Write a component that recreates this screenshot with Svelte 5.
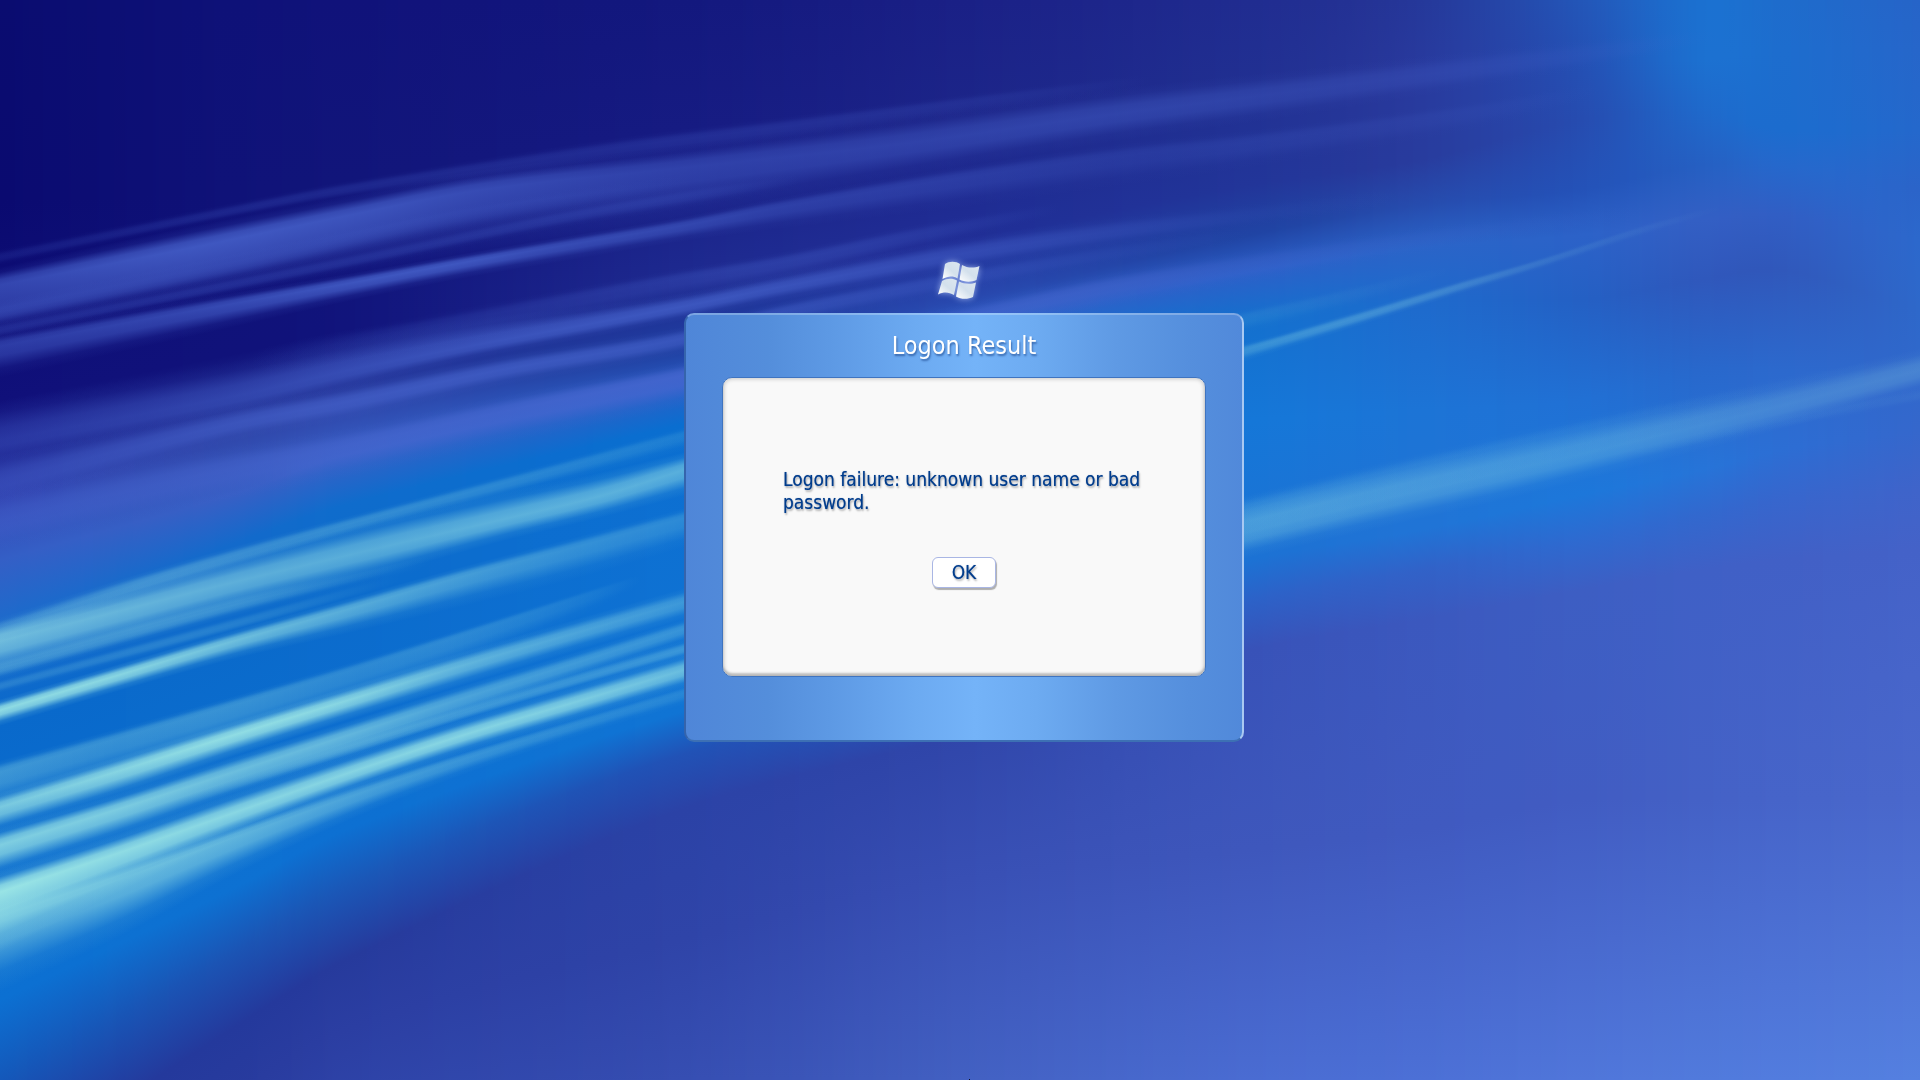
<script>
  // Smooth backdrop: each column lists [y, colour] bands that flow into the next column.
  const columns = [
    [0, '0:0a0c70 200:0a0a70 400:10107a 500:3347b4 560:345fc6 630:1a6ccc 720:0969cb 1000:0c70d2 1080:1458ba 1180:24389c 1280:283a9e 1400:2c409f'],
    [230, '0:0e1178 190:0f1278 355:10127a 440:3048ac 495:385fc5 545:136acb 650:0a6acb 890:0d71d2 955:1b54b4 1030:24399c 1100:283b9e 1200:2c40a4'],
    [345, '0:10127a 180:11157a 330:11147c 400:2c42a6 455:3860c6 505:0f6ccc 600:0b6bcc 830:0d70d2 885:1a58b8 960:263a9c 1030:2b3ea2 1120:2f45aa'],
    [680, '0:13187e 130:161b82 285:1e2a90 350:2040a2 388:2a60c6 425:0a6ed0 520:0d70d2 712:1074d4 755:2152b6 810:2b42a6 940:2f44a8 1080:364eb2'],
    [960, '0:1a2086 120:1c2589 240:202e96 300:2848ae 330:2e62c8 360:1070d0 450:1074d4 640:1476d6 690:2458bc 735:3046aa 880:384fb4 1080:4260c2'],
    [1250, '0:202c90 90:213092 185:223599 235:2044a4 272:2c60c8 320:1470ce 420:1577d8 560:1c72d4 600:2c62c8 650:3852b8 850:3e57bc 1080:4a6cd2'],
    [1420, '0:25389a 70:283a9e 160:283c9e 205:264cae 248:2a64c8 300:1e6acc 410:1c74d6 530:2074d6 570:3162c8 620:3b58be 830:405ac0 1080:4c70d6'],
    [1580, '0:2356b8 60:2450b4 120:264cb0 190:2452b8 235:2c62c8 300:2460c4 400:2170d4 495:1d77da 540:2e6ad0 590:3d5ec3 800:415cc2 1080:5076da'],
    [1700, '0:1b70d0 60:1c70d0 112:1f68ca 165:255fc2 220:335fc4 280:2f58bc 370:2868cc 470:2674d8 515:3268ce 570:3f60c6 800:4461c6 1080:517adc'],
    [1780, '0:1e6ccc 50:1d6dce 130:1c6cce 165:2568cc 215:315ec4 270:3058bb 370:2c69cd 450:2c6ed4 500:3766cd 560:4160c6 800:4664c9 1080:527cde'],
    [1920, '0:2664c8 50:2666ca 130:2468cc 190:2b64c9 240:2c68cc 310:2e68ca 380:3068cc 430:3567cc 490:3f64ca 550:4462c8 800:4a68cc 1080:5480e0'],
  ].map(([x, bands]) => [x, ...bands.split(' ').flatMap((band) => {
    const [y, hex] = band.split(':');
    return [+y, ...[0, 2, 4].map((i) => parseInt(hex.slice(i, i + 2), 16))];
  })]);

  // Light streaks: nodes are [x, y, fade above, fade below, strength].
  const violet = '76,106,212';
  const aqua = '172,244,232';
  const streaks = [
    [violet, [[0,285,18,62,.62],[180,250,22,58,.78],[345,216,20,60,.74],[480,190,20,60,.62],[680,168,22,50,.46],[900,144,28,34,.42],[1100,116,26,28,.4],[1290,92,22,25,.3],[1600,52,15,15,.1],[1720,35,10,10,0]]],
    [violet, [[0,312,12,14,.3],[240,264,12,14,.25],[440,220,10,14,.15],[690,180,10,10,0]]],
    [violet, [[0,257,8,8,.16],[230,211,8,8,.22],[345,189,8,10,.22],[600,150,10,16,.22],[780,127,10,16,.22],[1000,98,8,14,.14],[1150,80,8,10,0]]],
    [violet, [[0,346,14,32,.5],[180,313,12,26,.6],[350,283,10,18,.75],[460,263,9,16,.75],[560,246,9,16,.6],[680,226,9,16,.5],[780,207,10,22,.38],[960,178,12,30,.3],[1128,155,12,30,.2],[1250,142,12,26,.18],[1460,113,10,20,.1],[1600,90,10,10,0]]],
    [violet, [[0,330,8,8,.25],[340,263,9,9,.25],[550,220,9,10,.25],[690,196,9,12,.2],[800,180,8,8,0]]],
    [violet, [[0,440,40,20,.25],[230,397,36,20,.4],[345,371,32,18,.5],[460,348,28,14,.6],[600,322,18,14,.65],[690,305,14,14,.65],[780,287,14,14,.58],[960,254,16,16,.42],[1100,233,14,14,.25],[1250,215,12,12,.08],[1400,196,12,12,0]]],
    [violet, [[250,360,12,20,0],[450,322,12,24,.18],[660,282,10,22,.25],[780,262,10,20,.3],[908,236,10,16,.22],[1060,208,8,8,0]]],
    [violet, [[0,480,25,24,.25],[230,424,18,18,.5],[345,402,16,18,.55],[500,370,14,16,.6],[680,339,12,16,.55],[780,312,10,16,.4],[960,278,10,14,.25],[1100,255,10,10,.1],[1250,234,10,10,0]]],
    [violet, [[0,520,30,30,.3],[176,480,25,30,.4],[345,446,18,32,.5],[500,412,16,32,.6],[680,376,14,32,.7],[960,318,14,20,.5],[1100,288,14,20,.45],[1240,265,14,20,.25],[1450,235,12,14,.1],[1650,210,10,14,0]]],
    [aqua, [[0,629,12,16,.2],[75,604,11,16,.26],[150,580,10,16,.3],[264,547,9,14,.26],[378,516,8,12,.24],[500,484,8,14,.2],[680,436,8,16,.12]]],
    [aqua, [[0,641,20,36,.58],[115,612,22,34,.54],[230,583,26,30,.5],[370,550,30,28,.48],[500,520,28,22,.5],[600,496,24,22,.5],[680,471,18,26,.48]]],
    [aqua, [[0,668,10,12,.25],[230,606,10,12,.25],[345,579,8,10,.1],[430,560,8,10,0]]],
    [aqua, [[0,686,7,7,.16],[230,625,8,8,.16],[400,578,8,8,0]]],
    [aqua, [[0,710,11,16,.82],[115,676,11,16,.78],[230,642,11,18,.62],[345,610,11,24,.48],[460,577,10,30,.36],[575,547,10,32,.26],[680,519,10,30,.2]]],
    [aqua, [[0,772,12,40,.32],[115,739,10,40,.28],[230,706,9,40,.28],[345,672,8,36,.22],[460,636,7,30,.2],[575,599,6,20,.1],[640,578,5,10,0]]],
    [aqua, [[0,807,15,26,.68],[115,772,15,26,.76],[230,736,14,22,.82],[345,701,14,20,.76],[460,666,14,20,.54],[575,633,14,18,.4],[680,603,14,18,.3]]],
    [aqua, [[0,845,18,32,.72],[115,810,16,30,.7],[230,773,16,26,.6],[345,736,14,24,.54],[460,699,13,20,.4],[575,663,11,16,.32],[680,630,10,14,.26]]],
    [aqua, [[180,802,8,8,0],[345,750,9,9,.25],[460,714,9,9,.28],[575,680,9,9,.28],[680,650,9,9,.28]]],
    [aqua, [[0,892,22,60,.88],[115,854,20,40,.82],[230,814,20,26,.78],[345,774,18,20,.76],[460,736,16,18,.76],[575,702,16,18,.7],[680,671,16,18,.58]]],
    [aqua, [[0,922,20,70,.45],[115,881,14,58,.55],[230,839,12,38,.52],[345,798,11,24,.4],[460,760,9,16,.28],[575,725,8,12,.2],[680,694,8,12,.15]]],
    [aqua, [[680,510,30,30,0],[1244,350,7,12,.24],[1349,320,7,9,.26],[1460,286,6,8,.2],[1538,263,5,7,.12],[1640,230,5,7,.05],[1720,208,5,5,0]]],
    [aqua, [[1100,350,10,10,.1],[1244,318,9,16,.08],[1349,294,8,14,.04],[1450,270,8,8,0]]],
    [aqua, [[1000,590,28,26,.3],[1244,533,36,26,.28],[1380,500,36,28,.27],[1512,470,34,28,.26],[1644,439,32,26,.24],[1780,406,26,24,.2],[1920,370,22,22,.2]]],
    [aqua, [[1000,565,12,12,.1],[1244,511,16,34,.14],[1380,478,16,36,.1],[1512,447,16,34,.07],[1700,405,14,24,.03],[1920,356,8,8,0]]],
    [aqua, [[1600,460,6,6,0],[1780,422,8,8,.03],[1920,395,8,8,.05]]],
  ];

  // Catmull-Rom interpolation over rows whose first value is x.
  function sample(rows, x) {
    let i = 0;
    while (i < rows.length - 2 && rows[i + 1][0] < x) i++;
    const b = rows[i], c = rows[i + 1];
    const a = rows[i - 1], d = rows[i + 2];
    const w = c[0] - b[0], t = (x - b[0]) / w;
    return b.map((v, k) => {
      const m = (c[k] - v) / w;
      const m0 = (a ? (c[k] - a[k]) / (c[0] - a[0]) : m) * w;
      const m1 = (d ? (d[k] - v) / (d[0] - b[0]) : m) * w;
      const t2 = t * t, t3 = t2 * t;
      return (2 * t3 - 3 * t2 + 1) * v + (t3 - 2 * t2 + t) * m0 + (3 * t2 - 2 * t3) * c[k] + (t3 - t2) * m1;
    });
  }

  function paint(canvas) {
    const ctx = canvas.getContext('2d');
    for (let x = 0; x < 1920; x++) {
      const col = sample(columns, x);
      const end = col[col.length - 4];
      const base = ctx.createLinearGradient(0, 0, 0, end);
      for (let k = 1; k < col.length; k += 4) {
        base.addColorStop(Math.min(1, Math.max(0, col[k] / end)), `rgb(${col[k + 1]},${col[k + 2]},${col[k + 3]})`);
      }
      ctx.fillStyle = base;
      ctx.fillRect(x, 0, 1, 1080);
      for (const [color, nodes] of streaks) {
        // Streaks run on a little past their last node, behind the dialog's edge.
        if (x < nodes[0][0] || x > nodes[nodes.length - 1][0] + 12) continue;
        const [, y, up, down, strength] = sample(nodes, x);
        if (strength <= 0) continue;
        const glow = ctx.createLinearGradient(0, y - up, 0, y + down);
        const peak = up / (up + down);
        for (const [at, level] of [[0, 0], [.3, .16], [.7, .84], [1, 1]]) {
          glow.addColorStop(peak * at, `rgba(${color},${strength * level})`);
        }
        for (const [at, level] of [[.3, .84], [.7, .16], [1, 0]]) {
          glow.addColorStop(peak + (1 - peak) * at, `rgba(${color},${strength * level})`);
        }
        ctx.fillStyle = glow;
        ctx.fillRect(x, y - up, 1, up + down);
      }
    }
    ctx.fillStyle = '#0a0c1c';
    ctx.fillRect(969, 1079, 1, 1);
  }
</script>

<div class="screen">
  <canvas class="backdrop" width="1920" height="1080" aria-hidden="true" use:paint></canvas>
  <main>
    <svg class="logo" viewBox="2 0 60 52" aria-hidden="true">
      <defs>
        <linearGradient id="pane" x1="0" y1="1" x2="1" y2="0">
          <stop offset="0" stop-color="#fff" />
          <stop offset=".5" stop-color="#d3e0ec" />
          <stop offset="1" stop-color="#dde7ef" />
        </linearGradient>
      </defs>
      <g fill="url(#pane)">
        <path d="M13 12C17 9 24 9 28 12L25.500 26.500C21 23.500 16 24 10.500 27Z" />
        <path d="M30 13C35 16 42 16.500 47.500 14L44.500 28C39 30.500 32 30 27.500 27.500Z" />
        <path d="M10 29C15 26 21 26 25 28.500L22 43C17 40 12 39.500 6 42.500Z" />
        <path d="M27 29.500C32 32 39 32.500 44 30.500L41 45C36 47.500 29 47.500 24 44.500Z" />
      </g>
    </svg>
    <section class="dialog" role="dialog" aria-labelledby="title">
      <h1 id="title">Logon Result</h1>
      <div class="body">
        <p>Logon failure: unknown user name or bad password.</p>
        <button type="button">OK</button>
      </div>
    </section>
  </main>
</div>

<style>
  :global(body) {
    background: #1c2c92;
  }
  .screen {
    position: relative;
    min-height: 100vh;
    font-family: "DejaVu Sans Condensed", "DejaVu Sans", Tahoma, sans-serif;
  }
  .backdrop {
    position: absolute;
    width: 100%;
    height: 100%;
  }
  main {
    position: relative;
    display: flex;
    flex-direction: column;
    align-items: center;
    padding: 252px 0 24px 8px;
  }
  .logo {
    width: 60px;
    height: 52px;
    margin-bottom: 9px;
    filter: drop-shadow(0 0 3px rgba(190, 210, 255, .75));
  }
  .dialog {
    box-sizing: border-box;
    width: 560px;
    max-width: 96%;
    padding: 0 36px 63px;
    border: 2px solid;
    border-color: rgba(255, 255, 255, .25) #a9c9f2 #3d70b4 #3564ac;
    border-radius: 10px;
    background: linear-gradient(90deg, #4f86d8, #548edb 15%, #5d99e4 26%, #6caaf1 41%, #74b3f8 52%, #6dabf1 63%, #5f9ae4 77%, #558fdd 90%, #5189da) border-box;
  }
  h1 {
    margin: 0;
    font-size: 25px;
    font-weight: 400;
    line-height: 62px;
    text-align: center;
    color: #fff;
    text-shadow: 1px 2px 2px rgba(20, 60, 130, .6);
  }
  .body {
    display: flex;
    flex-direction: column;
    align-items: center;
    gap: 43px;
    padding: 90px 60px 88px;
    border: 1px solid #3f74c0;
    border-radius: 10px;
    background: #f9f9f9;
    box-shadow: inset 0 -3px 2px rgba(0, 0, 0, .16), inset 0 0 4px 1px rgba(0, 0, 0, .2);
  }
  p {
    margin: 0;
    font-size: 19px;
    line-height: 23px;
    color: #003c8c;
    text-shadow: 0 0 1px rgba(0, 60, 140, .6), 1px 2px 2px rgba(0, 0, 0, .3);
  }
  button {
    width: 64px;
    height: 31px;
    padding: 0;
    border: 1px solid #a9b6e4;
    border-radius: 6px;
    background: #fff;
    box-shadow: 1px 2px 1px rgba(0, 0, 0, .3);
    font: inherit;
    font-size: 19px;
    line-height: 23px;
    color: #003c8c;
    text-shadow: 0 0 1px rgba(0, 60, 140, .6), 1px 2px 2px rgba(0, 0, 0, .3);
  }
</style>
